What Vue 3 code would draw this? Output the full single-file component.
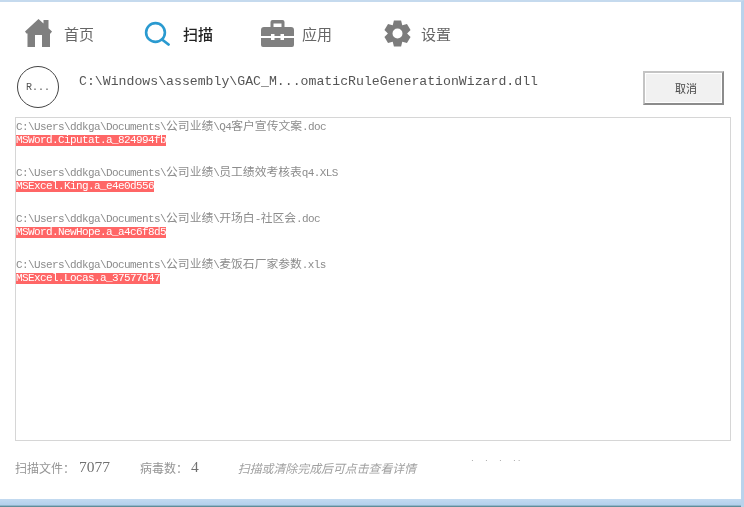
<template>
  <div class="window">
    <nav class="nav">
      <a v-for="item in navItems" :key="item.label" class="nav-item" :class="[item.key, { active: item.active }]">
        <svg v-if="item.key === 'home'" class="nav-icon" width="27" height="28" viewBox="0 0 27 28">
          <path d="M13.5 0 L18.5 4.6 V1 H23.5 V9.2 L27 12.6 L25.6 14.4 H25 V28 H17 V16 H10 V28 H2.5 V14.4 H1.4 L0 12.6 Z" fill="#7f7f7f" />
        </svg>
        <svg v-else-if="item.key === 'scan'" class="nav-icon" width="26" height="25" viewBox="0 0 26 25">
          <circle cx="11.5" cy="11.5" r="9.4" fill="none" stroke="#2a9ad0" stroke-width="2.6" />
          <path d="M18 18.5 L24.5 23.5" stroke="#2a9ad0" stroke-width="2.8" stroke-linecap="round" />
        </svg>
        <svg v-else-if="item.key === 'apps'" class="nav-icon" width="33" height="28" viewBox="0 0 33 28">
          <path d="M9.5 8 V3 Q9.5 1 11.5 1 H21.5 Q23.5 1 23.5 3 V8 H20.5 V4.5 H12.5 V8 Z" fill="#808080" />
          <path d="M3 8 H30 Q33 8 33 11 V17 H23 V15 H19.5 V17 H13.5 V15 H10 V17 H0 V11 Q0 8 3 8 Z" fill="#808080" />
          <path d="M0 19 H10 V21 H13.5 V19 H19.5 V21 H23 V19 H33 V26 Q33 28 31 28 H2 Q0 28 0 26 Z" fill="#808080" />
        </svg>
        <svg v-else class="nav-icon" width="27" height="27" viewBox="0 0 27 27">
          <path fill="#7c7c7c" fill-rule="evenodd" :d="gearPath" />
        </svg>
        <span class="nav-label">{{ item.label }}</span>
      </a>
    </nav>

    <div class="current">
      <div class="badge">R...</div>
      <div class="current-path">C:\Windows\assembly\GAC_M...omaticRuleGenerationWizard.dll</div>
      <button class="cancel" type="button">取消</button>
    </div>

    <div class="results">
      <div v-for="row in results" :key="row.virus" class="result">
        <div class="file">
          <template v-for="(part, i) in splitCjk(row.file)" :key="i">
            <span :class="{ cjk: part.cjk }">{{ part.text }}</span>
          </template>
        </div>
        <div class="virus"><span>{{ row.virus }}</span></div>
      </div>
    </div>

    <footer class="status">
      <span class="stat-label">扫描文件&#xFF1A;</span>
      <span class="stat-value files">7077</span>
      <span class="stat-label virus-label">病毒数&#xFF1A;</span>
      <span class="stat-value">4</span>
      <span class="hint">扫描或清除完成后可点击查看详情</span>
      <span class="dots">. . . ..</span>
    </footer>
  </div>
</template>

<script setup>
const navItems = [
  { key: 'home', label: '首页' },
  { key: 'scan', label: '扫描', active: true },
  { key: 'apps', label: '应用' },
  { key: 'settings', label: '设置' }
]

const results = [
  { file: 'C:\\Users\\ddkga\\Documents\\公司业绩\\Q4客户宣传文案.doc', virus: 'MSWord.Ciputat.a_824994fb' },
  { file: 'C:\\Users\\ddkga\\Documents\\公司业绩\\员工绩效考核表q4.XLS', virus: 'MSExcel.King.a_e4e0d556' },
  { file: 'C:\\Users\\ddkga\\Documents\\公司业绩\\开场白-社区会.doc', virus: 'MSWord.NewHope.a_a4c6f8d5' },
  { file: 'C:\\Users\\ddkga\\Documents\\公司业绩\\麦饭石厂家参数.xls', virus: 'MSExcel.Locas.a_37577d47' }
]

// six chunky teeth, one pointing straight up
function buildGear() {
  const c = 13.5
  const pts = []
  for (let i = 0; i < 6; i++) {
    const a = (i * Math.PI) / 3 - Math.PI / 2
    const at = (r, d) => `${(c + r * Math.cos(a + d)).toFixed(2)} ${(c + r * Math.sin(a + d)).toFixed(2)}`
    pts.push(at(9.6, -0.52), at(13.5, -0.27), at(13.5, 0.27), at(9.6, 0.52))
  }
  return `M${pts.join(' L')} Z M13.5 8.5 A5 5 0 1 0 13.5 18.5 A5 5 0 1 0 13.5 8.5 Z`
}
const gearPath = buildGear()

// latin runs and CJK runs use different sizes so the columns line up
function splitCjk(text) {
  return text.split(/([\u4e00-\u9fff]+)/).filter(Boolean).map((t) => ({
    text: t,
    cjk: /[\u4e00-\u9fff]/.test(t)
  }))
}
</script>

<style>
html,
body {
  margin: 0;
  background: #fff;
}
</style>

<style scoped>
.window {
  width: 744px;
  height: 507px;
  box-sizing: border-box;
  background: #fff;
  border-top: 2px solid #c5daee;
  border-right: 3px solid #b9d3ec;
  display: flex;
  flex-direction: column;
  position: relative;
  overflow: hidden;
  filter: blur(0.45px);
  font-family: "Liberation Mono", "Noto Sans CJK SC", monospace;
}

.window::after {
  content: '';
  height: 8px;
  margin-top: auto;
  margin-right: -3px;
  background: linear-gradient(#c3daf0 0, #b4d0ec 75%, #6f9aa8 88%, #4f7f8c 100%);
}

.nav {
  height: 46px;
  display: flex;
  align-items: center;
  padding-top: 8px;
  padding-left: 25px;
}

.nav-item {
  display: flex;
  align-items: center;
  color: #666;
  font-family: "Noto Sans CJK SC", sans-serif;
  font-size: 15px;
}

.nav-item.home { width: 119px; }
.nav-item.scan { width: 117px; }
.nav-item.apps { width: 123px; }

.nav-item.active {
  color: #222;
  font-weight: 500;
}

.nav-label { margin-left: 12px; }
.nav-item.home .nav-label { margin-left: 12px; }
.nav-item.scan .nav-label { margin-left: 13px; }
.nav-item.apps .nav-label { margin-left: 8px; }
.nav-item.settings .nav-label { margin-left: 10px; }

.current {
  height: 44px;
  margin-top: 9px;
  display: flex;
  align-items: center;
  padding-left: 17px;
}

.badge {
  width: 42px;
  height: 42px;
  box-sizing: border-box;
  border: 1px solid #444;
  border-radius: 50%;
  display: flex;
  align-items: center;
  justify-content: center;
  font-size: 10px;
  color: #555;
}

.current-path {
  margin-left: 20px;
  margin-bottom: 12px;
  font-size: 13.2px;
  color: #555;
  white-space: nowrap;
}

.cancel {
  margin-left: auto;
  margin-right: 17px;
  margin-top: 2px;
  width: 81px;
  height: 34px;
  box-sizing: border-box;
  background: #f1f1f1;
  border: 2px solid;
  border-color: #c4c4c4 #8c8c8c #8c8c8c #c4c4c4;
  box-shadow: inset 0 0 0 1px #fff;
  font-family: "Noto Sans CJK SC", sans-serif;
  font-size: 11px;
  color: #444;
  padding: 0 0 0 5px;
}

.results {
  margin: 8px 0 0 15px;
  width: 716px;
  height: 324px;
  box-sizing: border-box;
  border: 1px solid #d6d6d6;
  padding-top: 3px;
  font-size: 11px;
  letter-spacing: -0.6px;
}

.result {
  height: 46px;
}

.file {
  height: 13px;
  line-height: 13px;
  color: #8c8c8c;
  white-space: nowrap;
}

.file .cjk {
  font-size: 11.8px;
  letter-spacing: 0;
}

.virus {
  height: 11px;
  margin-top: 1px;
  line-height: 11px;
  color: #fff;
  white-space: nowrap;
}

.virus span {
  display: inline-block;
  background: #ff6666;
}

.status {
  display: flex;
  align-items: center;
  height: 20px;
  margin-top: 16px;
  padding-left: 15px;
  font-family: "Noto Sans CJK SC", sans-serif;
  position: relative;
}

.stat-label {
  font-size: 12px;
  color: #959595;
}

.stat-value {
  font-family: "Liberation Serif", serif;
  font-size: 15.5px;
  color: #707070;
  margin-left: 3px;
}

.stat-value.files { margin-left: 4px; }
.virus-label { margin-left: 30px; }

.hint {
  margin-left: 39px;
  font-size: 11.9px;
  font-style: italic;
  color: #a0a0a0;
}

.dots {
  position: absolute;
  left: 470px;
  top: -3px;
  font-family: "Liberation Mono", monospace;
  font-size: 8px;
  word-spacing: 4.4px;
  color: #aaa;
}
</style>
